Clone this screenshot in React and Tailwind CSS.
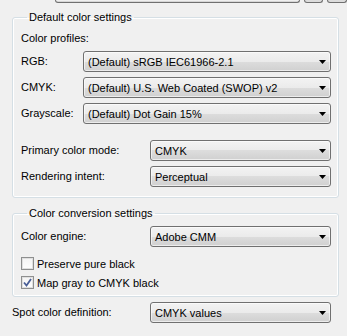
import React from "react";

const selBg =
  "bg-[linear-gradient(to_bottom,#f3f3f3_0%,#ebebeb_50%,#dddddd_50%,#d0d0d0_100%)]";

function Arrow() {
  return (
    <svg width="7" height="4" viewBox="0 0 7 4" className="shrink-0">
      <path d="M0 0H7L3.5 4Z" fill="#000" />
    </svg>
  );
}

function Select({ value }) {
  return (
    <div
      className={`flex-1 h-[21px] flex items-center justify-between pl-[4px] pr-[4px] border border-[#707070] rounded-[3px] ${selBg} shadow-[inset_0_0_0_1px_rgba(255,255,255,0.6)]`}
    >
      <span className="leading-[14px] whitespace-nowrap">{value}</span>
      <Arrow />
    </div>
  );
}

function Row({ label, labelW, value }) {
  return (
    <div className="flex items-center">
      <div className={`${labelW} shrink-0 whitespace-nowrap`}>{label}</div>
      <Select value={value} />
    </div>
  );
}

function Check({ checked, label }) {
  return (
    <div className="h-[19px] flex items-center gap-[3px]">
      <div className="w-[13px] h-[13px] border border-[#8e8f8f] bg-[linear-gradient(to_bottom,#f4f4f4,#fefefe)] flex items-center justify-center shadow-[inset_0_0_0_1px_#e0e0e0]">
        {checked && (
          <svg width="9" height="9" viewBox="0 0 9 9">
            <path
              d="M1 4.5L3.5 7.5L8 1"
              fill="none"
              stroke="#4a5f97"
              strokeWidth="1.8"
            />
          </svg>
        )}
      </div>
      <span className="leading-[14px]">{label}</span>
    </div>
  );
}

function Group({ title, children, className = "" }) {
  return (
    <fieldset
      className={`mx-[8px] ml-[12px] border border-[#d5dfe5] rounded-[3px] pl-[8px] pr-[7px] shadow-[inset_0_0_0_1px_#ffffff] ${className}`}
    >
      <legend className="ml-[6px] px-[2px] leading-[14px]">{title}</legend>
      {children}
    </fieldset>
  );
}

export default function App() {
  return (
    <div
      className="w-[347px] h-[336px] bg-[#f0f0f0] text-[11px] text-black overflow-hidden"
      style={{ fontFamily: '"Liberation Sans", Arial, sans-serif' }}
    >
      <div className="flex h-[3px] ml-[55px] gap-[4px]">
        <div className={`w-[249px] border-x border-b border-[#707070] rounded-b-[3px] ${selBg}`} />
        <div className="w-[20px] border-x border-b border-[#707070] rounded-b-[3px] bg-[#dcdcdc]" />
        <div className="w-[20px] border-x border-b border-[#707070] rounded-b-[3px] bg-[#dcdcdc]" />
      </div>

      <Group title="Default color settings" className="mt-[7px] pb-[10px]">
        <div className="pt-[7px] leading-[14px]">Color profiles:</div>
        <div className="mt-[6px] flex flex-col gap-[5px]">
          <Row label="RGB:" labelW="w-[62px]" value="(Default) sRGB IEC61966-2.1" />
          <Row label="CMYK:" labelW="w-[62px]" value="(Default) U.S. Web Coated (SWOP) v2" />
          <Row label="Grayscale:" labelW="w-[62px]" value="(Default) Dot Gain 15%" />
        </div>
        <div className="mt-[16px] flex flex-col gap-[5px]">
          <Row label="Primary color mode:" labelW="w-[129px]" value="CMYK" />
          <Row label="Rendering intent:" labelW="w-[129px]" value="Perceptual" />
        </div>
      </Group>

      <Group title="Color conversion settings" className="mt-[8px] pb-[4px]">
        <div className="pt-[6px]">
          <Row label="Color engine:" labelW="w-[129px]" value="Adobe CMM" />
        </div>
        <div className="mt-[7px]">
          <Check label="Preserve pure black" />
          <Check checked label="Map gray to CMYK black" />
        </div>
      </Group>

      <div className="mt-[5px] ml-[12px] mr-[16px]">
        <Row label="Spot color definition:" labelW="w-[138px]" value="CMYK values" />
      </div>
    </div>
  );
}
